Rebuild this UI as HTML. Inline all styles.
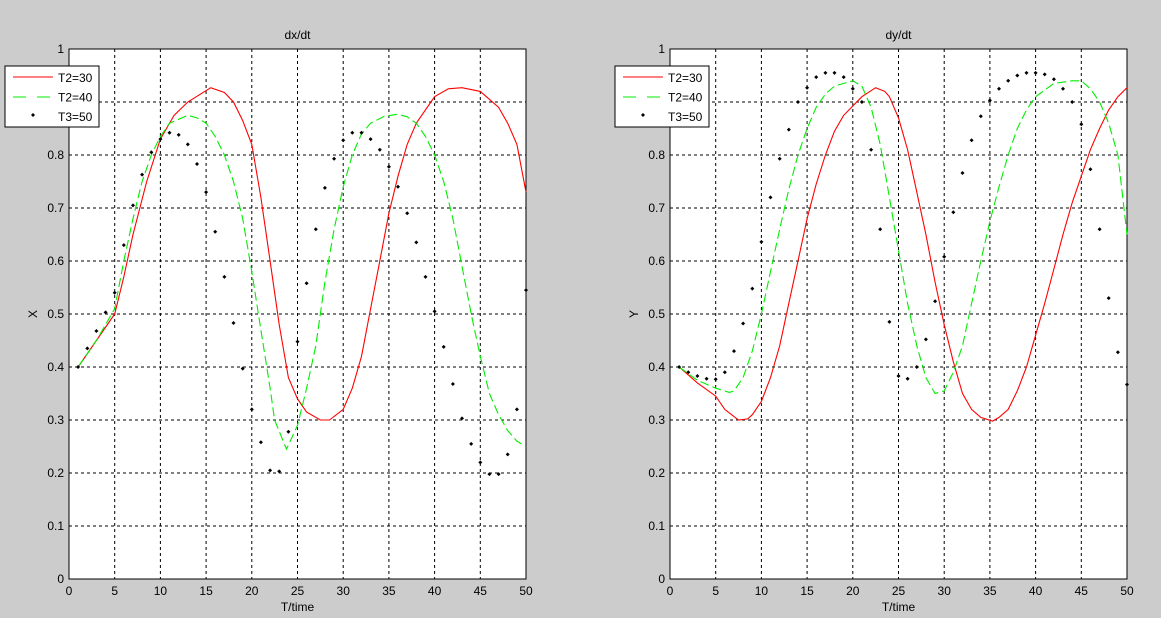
<!DOCTYPE html>
<html><head><meta charset="utf-8"><style>
html,body{margin:0;padding:0;background:#cccccc;}
svg{display:block;font-family:"Liberation Sans",Arial,sans-serif;}
</style></head><body>
<svg id="s" width="1161" height="618" xmlns="http://www.w3.org/2000/svg"></svg>
<script>
var S=document.getElementById('s'),out='';
var L={x0:69,x1:526,yb:579,yt:49,title:'dx/dt',yl:'X',
red:[[1,.40],[3,.45],[5,.50],[6,.57],[7,.65],[8.5,.75],[10,.83],[11.5,.875],[13,.90],[15.5,.927],[17,.918],[18,.90],[19,.865],[20,.82],[21,.72],[22,.6],[23,.48],[24,.38],[25,.34],[26,.315],[27.5,.30],[28.5,.30],[30,.32],[31,.36],[32,.42],[33,.51],[34,.6],[35,.69],[36,.76],[37,.82],[38,.86],[40,.91],[41.5,.925],[43,.927],[45,.92],[46,.905],[47,.89],[48,.86],[49,.82],[50,.73]],
green:[[1,.40],[3,.45],[5,.51],[6,.6],[7,.68],[8,.75],[9,.80],[10,.835],[11,.86],[13,.875],[14,.87],[15,.86],[16,.835],[17,.80],[18,.75],[19,.68],[20,.58],[21,.47],[22,.36],[22.5,.30],[23.8,.245],[25,.29],[26,.36],[27,.44],[28,.56],[29,.66],[30,.74],[31,.80],[32,.84],[33,.86],[34.5,.873],[36,.877],[37,.872],[38,.86],[39,.835],[40,.80],[41,.75],[42,.68],[43,.59],[44,.50],[45,.42],[46,.35],[47,.31],[48,.28],[49,.26],[50,.25]],
dots:[.40,.435,.468,.503,.54,.63,.705,.763,.805,.83,.842,.838,.82,.783,.73,.655,.57,.483,.397,.32,.258,.205,.203,.278,.448,.558,.66,.738,.793,.828,.842,.842,.83,.81,.778,.74,.69,.635,.57,.505,.438,.368,.303,.255,.22,.198,.198,.235,.32,.545],lg:5};
var R={x0:670,x1:1127,yb:579,yt:49,title:'dy/dt',yl:'Y',
red:[[1,.40],[3,.37],[5,.345],[6,.32],[7.5,.30],[8.5,.302],[9,.31],[10,.335],[11,.38],[12,.44],[13,.52],[14,.60],[15,.68],[16,.745],[17,.80],[18,.845],[19,.875],[21,.91],[22.5,.927],[23.5,.92],[24,.91],[25,.87],[26,.81],[27,.73],[28,.65],[29,.56],[30,.48],[31,.41],[32,.35],[33,.32],[34,.305],[35.3,.298],[36,.305],[37,.32],[38,.355],[39,.40],[40,.46],[41,.52],[42,.585],[43,.65],[44,.71],[45,.76],[46,.81],[47,.85],[48,.885],[49,.91],[50,.927]],
green:[[1,.40],[3,.375],[5,.36],[6.5,.352],[7,.355],[8,.38],[9,.43],[10,.50],[11,.58],[12,.66],[13,.735],[14,.80],[15,.85],[16,.89],[17,.915],[18,.93],[20,.94],[21,.93],[22,.89],[23,.82],[24,.72],[25,.62],[26,.52],[27,.44],[28,.38],[29,.35],[30,.355],[31,.39],[32,.44],[33,.52],[34,.60],[35,.675],[36,.74],[37,.80],[38,.85],[39,.885],[40,.91],[42,.935],[44,.94],[45,.94],[46,.925],[47,.90],[48,.86],[49,.80],[50,.65]],
dots:[.40,.39,.383,.378,.377,.39,.43,.482,.548,.636,.72,.793,.848,.90,.927,.947,.955,.955,.947,.925,.90,.81,.66,.485,.383,.378,.40,.452,.524,.608,.692,.766,.828,.873,.903,.925,.94,.95,.955,.955,.952,.943,.925,.90,.858,.773,.66,.53,.428,.367],lg:615};
function plot(A){
 var w=A.x1-A.x0,h=A.yb-A.yt;
 function px(x){return (A.x0+x/50*w).toFixed(1);}
 function py(y){return (A.yb-y*h).toFixed(1);}
 out+='<rect x="'+A.x0+'" y="'+A.yt+'" width="'+w+'" height="'+h+'" fill="#fff"/>';
 for(var i=1;i<10;i++){var x=px(i*5);out+='<line x1="'+x+'" y1="'+A.yt+'" x2="'+x+'" y2="'+A.yb+'" stroke="#000" stroke-dasharray="3,3"/>';
  var y=py(i/10);out+='<line x1="'+A.x0+'" y1="'+y+'" x2="'+A.x1+'" y2="'+y+'" stroke="#000" stroke-dasharray="3,3"/>';}
 for(var i=0;i<=10;i++){out+='<text x="'+px(i*5)+'" y="'+(A.yb+16)+'" font-size="12" text-anchor="middle">'+(i*5)+'</text>';
  var lab=i==0?'0':(i==10?'1':(i/10).toFixed(1));
  out+='<text x="'+(A.x0-5)+'" y="'+(+py(i/10)+4)+'" font-size="12" text-anchor="end">'+lab+'</text>';}
 out+='<rect x="'+A.x0+'" y="'+A.yt+'" width="'+w+'" height="'+h+'" fill="none" stroke="#000"/>';
 function pl(d,c,da){out+='<polyline fill="none" stroke="'+c+'" stroke-width="1.1" '+(da?'stroke-dasharray="9,4" ':'')+'points="'+d.map(function(p){return px(p[0])+','+py(p[1]);}).join(' ')+'"/>';}
 pl(A.red,'#ff0000');pl(A.green,'#00ee00',1);
 A.dots.forEach(function(v,i){var x=+px(i+1),y=+py(v);out+='<path d="M'+(x-2)+' '+y+'L'+x+' '+(y-2)+'L'+(x+2)+' '+y+'L'+x+' '+(y+2)+'Z" fill="#000"/>';});
 var cx=(A.x0+A.x1)/2;
 out+='<text x="'+cx+'" y="39" font-size="12" text-anchor="middle">'+A.title+'</text>';
 out+='<text x="'+cx+'" y="611" font-size="12" text-anchor="middle">T/time</text>';
 var yy=(A.yt+A.yb)/2;out+='<text x="'+(A.x0-32)+'" y="'+yy+'" font-size="12" text-anchor="middle" transform="rotate(-90 '+(A.x0-32)+' '+yy+')">'+A.yl+'</text>';
 var lx=A.lg;
 out+='<rect x="'+lx+'" y="66" width="94" height="61" fill="#fff" stroke="#000"/>';
 out+='<line x1="'+(lx+8)+'" y1="77" x2="'+(lx+48)+'" y2="77" stroke="#f00"/>';
 out+='<line x1="'+(lx+8)+'" y1="97" x2="'+(lx+48)+'" y2="97" stroke="#0e0" stroke-dasharray="13,11"/>';
 var dx=lx+28;out+='<path d="M'+(dx-2)+' 115L'+dx+' 113L'+(dx+2)+' 115L'+dx+' 117Z"/>';
 ['T2=30','T2=40','T3=50'].forEach(function(t,i){out+='<text x="'+(lx+53)+'" y="'+(82+i*19.5)+'" font-size="12">'+t+'</text>';});
}
plot(L);plot(R);S.innerHTML=out;
</script>
</body></html>
